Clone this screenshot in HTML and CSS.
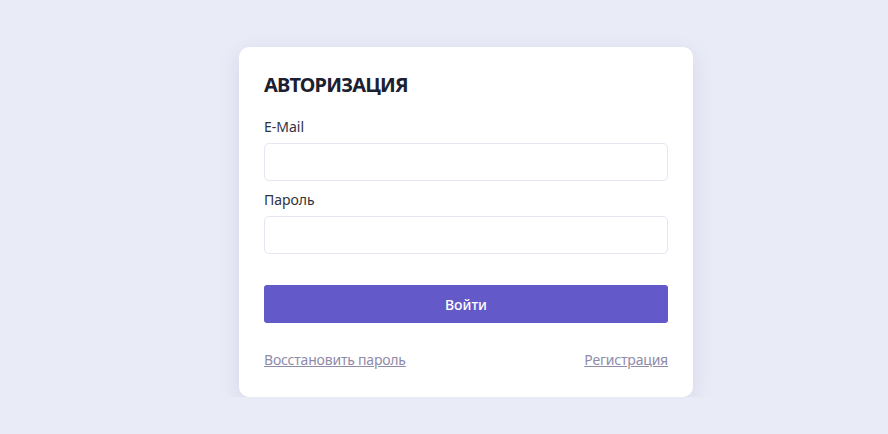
FILE: index.html
```html
<!DOCTYPE html>
<html lang="ru">
<head>
    <meta charset="UTF-8">
    <meta name="viewport" content="width=device-width, initial-scale=1.0">
    <title>Авторизация</title>
    <link rel="stylesheet" href="styles.css">
</head>
<body>
    <div class="page">
        <form class="auth-card" onsubmit="return false;">
            <h1 class="auth-title">АВТОРИЗАЦИЯ</h1>

            <div class="field">
                <label for="email">E-Mail</label>
                <input type="email" id="email" class="input">
            </div>

            <div class="field">
                <label for="password">Пароль</label>
                <input type="password" id="password" class="input">
            </div>

            <button type="submit" class="submit-btn">Войти</button>

            <div class="links">
                <a href="#">Восстановить пароль</a>
                <a href="#">Регистрация</a>
            </div>
        </form>
    </div>
</body>
</html>
```

FILE: styles.css
```css
body {
    font-family: 'Noto Sans', 'Open Sans', sans-serif;
    margin: 0;
    background-color: #e9ebf6;
    color: #2b2f3d;
}

.page {
    display: flex;
    justify-content: center;
    padding: 47px 0 0 44px;
}

.auth-card {
    width: 404px;
    background-color: #fff;
    padding: 25px 25px 27px;
    border-radius: 10px;
    box-shadow: 0 6px 20px rgba(130, 135, 185, 0.2);
}

.auth-title {
    margin: 0 0 19px;
    font-size: 20px;
    font-weight: 700;
    line-height: 26px;
    color: #1c2131;
    letter-spacing: -0.8px;
}

.field {
    display: flex;
    flex-direction: column;
    margin-bottom: 9px;
}

.field label {
    font-size: 14px;
    line-height: 20px;
    margin-bottom: 6px;
    color: #2e3242;
}

.input {
    height: 38px;
    box-sizing: border-box;
    border: 1px solid #e4e6f1;
    border-radius: 5px;
    padding: 0 12px;
    font-family: inherit;
    font-size: 14px;
    outline: none;
}

.submit-btn {
    display: block;
    width: 100%;
    height: 38px;
    margin-top: 31px;
    border: none;
    border-radius: 3px;
    background-color: #6359c8;
    color: #fff;
    font-family: inherit;
    font-size: 14px;
    font-weight: 500;
    cursor: pointer;
}

.links {
    display: flex;
    justify-content: space-between;
    margin-top: 27px;
    font-size: 14px;
    line-height: 20px;
    letter-spacing: -0.2px;
}

.links a {
    color: #8f8ba9;
}
```
